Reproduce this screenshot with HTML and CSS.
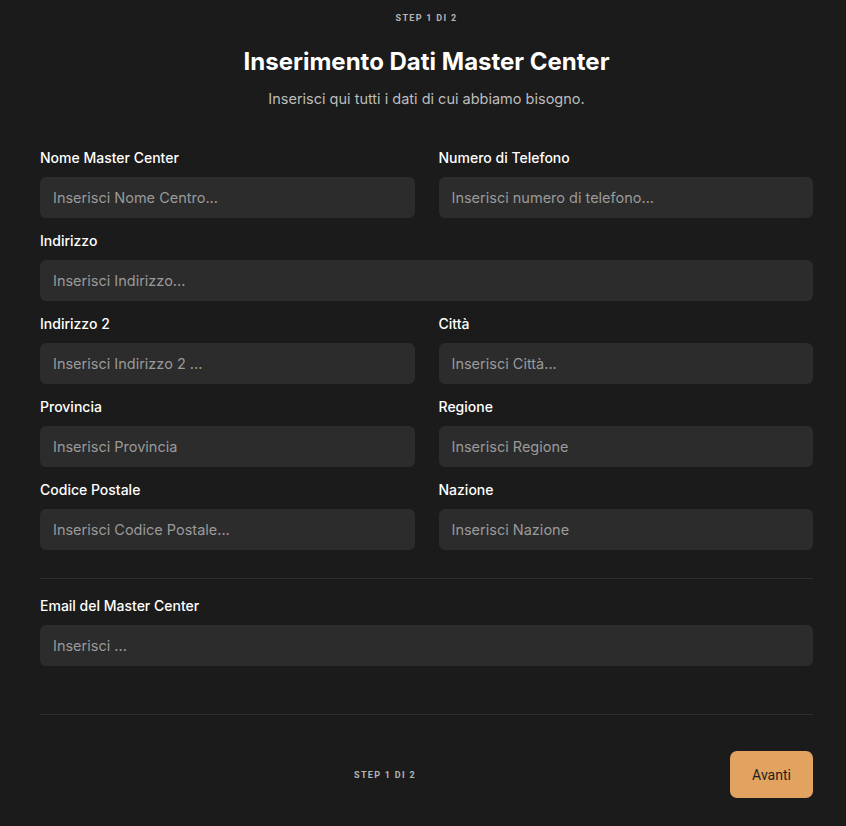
FILE: index.html
```html
<!DOCTYPE html>
<html lang="it">
  <head>
    <meta charset="UTF-8" />
    <meta name="viewport" content="width=device-width, initial-scale=1.0" />
    <title>Inserimento Dati Master Center</title>
    <link rel="stylesheet" href="styles.css">
  </head>
  <body>
    <div class="wizard">
      <div class="step-top">STEP 1 DI 2</div>
      <h1 class="title">Inserimento Dati Master Center</h1>
      <p class="subtitle">Inserisci qui tutti i dati di cui abbiamo bisogno.</p>

      <form class="form-grid">
        <div class="field">
          <label>Nome Master Center</label>
          <input type="text" placeholder="Inserisci Nome Centro..." />
        </div>
        <div class="field">
          <label>Numero di Telefono</label>
          <input type="text" placeholder="Inserisci numero di telefono..." />
        </div>
        <div class="field full">
          <label>Indirizzo</label>
          <input type="text" placeholder="Inserisci Indirizzo..." />
        </div>
        <div class="field">
          <label>Indirizzo 2</label>
          <input type="text" placeholder="Inserisci Indirizzo 2 ..." />
        </div>
        <div class="field">
          <label>Città</label>
          <input type="text" placeholder="Inserisci Città..." />
        </div>
        <div class="field">
          <label>Provincia</label>
          <input type="text" placeholder="Inserisci Provincia" />
        </div>
        <div class="field">
          <label>Regione</label>
          <input type="text" placeholder="Inserisci Regione" />
        </div>
        <div class="field">
          <label>Codice Postale</label>
          <input type="text" placeholder="Inserisci Codice Postale..." />
        </div>
        <div class="field">
          <label>Nazione</label>
          <input type="text" placeholder="Inserisci Nazione" />
        </div>
      </form>

      <hr class="divider" />

      <div class="field email-field">
        <label>Email del Master Center</label>
        <input type="email" placeholder="Inserisci ..." />
      </div>

      <hr class="divider bottom" />

      <div class="footer">
        <span class="step-bottom">STEP 1 DI 2</span>
        <button type="button" class="next-btn">Avanti</button>
      </div>
    </div>
  </body>
</html>
```

FILE: styles.css
```css
body {
  margin: 0;
  padding: 0;
  background: #1b1b1b;
  font-family: Inter, "Noto Sans", sans-serif;
  color: #fff;
}

.wizard {
  padding: 0 33px 28px 40px;
}

.step-top {
  padding-top: 13px;
  text-align: center;
  font-family: Roboto, sans-serif;
  font-size: 9px;
  font-weight: 700;
  letter-spacing: 1.3px;
  line-height: 11px;
  color: #b5b5b5;
}

.title {
  margin: 23px 0 0;
  text-align: center;
  font-size: 24px;
  line-height: 30px;
  font-weight: 700;
}

.subtitle {
  margin: 13px 0 0;
  text-align: center;
  font-size: 14.5px;
  line-height: 18px;
  color: #bdbdbd;
}

.form-grid {
  display: grid;
  grid-template-columns: 1fr 1fr;
  column-gap: 24px;
  row-gap: 13px;
  margin-top: 40px;
}

.field {
  display: flex;
  flex-direction: column;
}

.field.full {
  grid-column: 1 / span 2;
}

.field label {
  font-size: 14px;
  line-height: 20px;
  font-weight: 500;
  margin-bottom: 9px;
}

.field input {
  box-sizing: border-box;
  height: 41px;
  padding: 0 13px;
  border: none;
  border-radius: 6px;
  background: #2c2c2c;
  color: #fff;
  font-family: inherit;
  font-size: 14.5px;
  outline: none;
}

.field input::placeholder {
  color: #9a9a9a;
}

.divider {
  margin: 28px 0 0;
  border: none;
  border-top: 1px solid #2f2f2f;
}

.email-field {
  margin-top: 17px;
}

.divider.bottom {
  margin-top: 48px;
}

.footer {
  display: flex;
  align-items: center;
  margin-top: 36px;
}

.step-bottom {
  flex: 1;
  text-align: center;
  font-family: Roboto, sans-serif;
  font-size: 9px;
  font-weight: 700;
  letter-spacing: 1.3px;
  color: #b5b5b5;
}

.next-btn {
  width: 83px;
  height: 47px;
  border: none;
  border-radius: 7px;
  background: #e2a360;
  color: #1e1e1e;
  font-family: Roboto, sans-serif;
  font-size: 14px;
  cursor: pointer;
}
```
